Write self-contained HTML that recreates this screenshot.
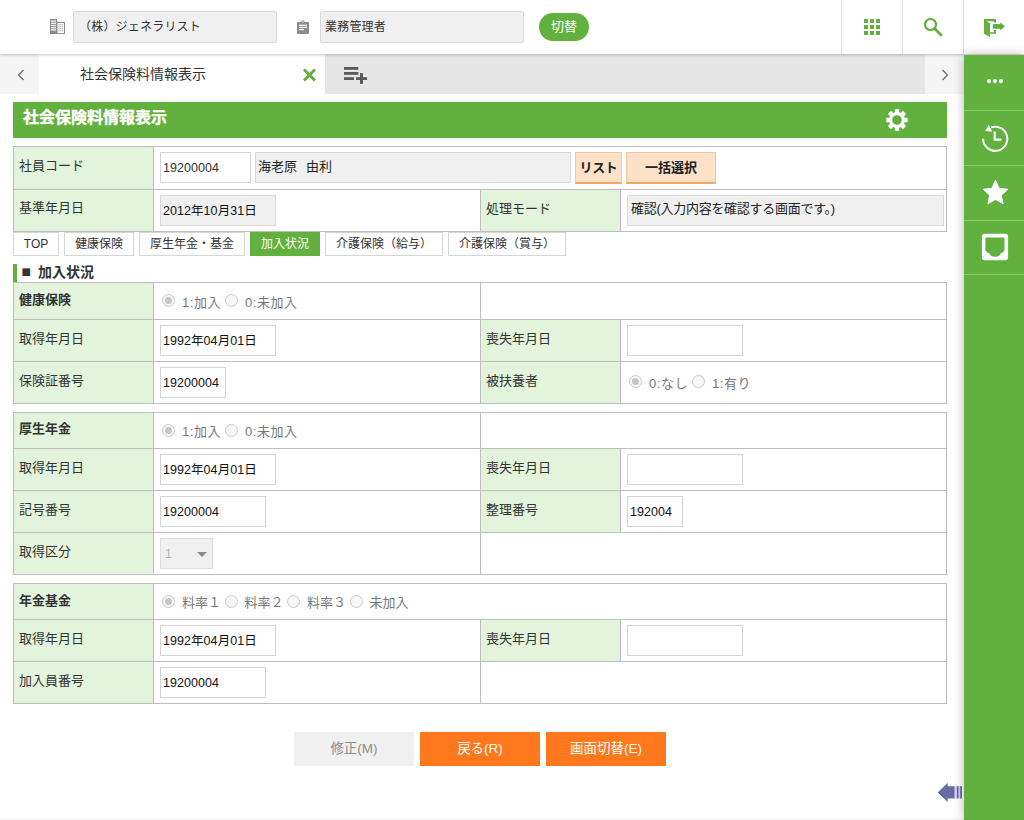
<!DOCTYPE html>
<html lang="ja">
<head>
<meta charset="utf-8">
<title>社会保険料情報表示</title>
<style>
*{box-sizing:border-box;margin:0;padding:0}
html,body{width:1024px;height:820px;overflow:hidden;background:#fff}
body{font-family:"Liberation Sans","Noto Sans CJK JP",sans-serif;font-size:13px;color:#333;position:relative}
.abs{position:absolute}
#hdr{position:absolute;left:0;top:0;width:1024px;height:54px;background:#fff;box-shadow:0 1px 3px rgba(0,0,0,.22);z-index:3}
.hbox{position:absolute;top:11px;height:32px;background:#f0f0f0;border:1px solid #d9d9d9;border-radius:2px;font-size:12px;line-height:30px;padding-left:7px;color:#333}
.hsep{position:absolute;top:0;width:1px;height:54px;background:#dedede}
#switch{position:absolute;left:539px;top:13px;width:50px;height:28px;border-radius:14px;background:#62b13e;color:#fff;font-size:13px;line-height:27px;text-align:center}
#side{position:absolute;left:964px;top:55px;width:60px;height:765px;background:#62b13e;box-shadow:0 0 10px rgba(0,0,0,.28);z-index:4}
#side .sep{position:absolute;left:0;width:60px;height:1px;background:#86c968}
#tabbar{position:absolute;left:0;top:54px;width:964px;height:40px;background:#e6e6e6}
#tabbar .arrow{position:absolute;top:0;width:39px;height:40px;background:#f5f5f5}
#tabbar .tab{position:absolute;left:39px;top:0;width:286px;height:40px;background:#fff;font-size:14px;line-height:41px;color:#333;padding-left:41px}
#title{position:absolute;left:13px;top:102px;width:934px;height:36px;background:#62b13e;color:#fff;font-weight:bold;font-size:16px;line-height:32px;padding-left:10px;-webkit-text-stroke:.35px #fff}
table.g{position:absolute;left:13px;width:933px;border-collapse:collapse;table-layout:fixed}
table.g td{border:1px solid #bdbdbd;vertical-align:top;padding:0;font-size:13px;color:#333;position:relative}
table.g td.l{background:#e2f4dc;padding:9px 0 0 5px;line-height:20px}
table.g td.l b{font-weight:bold}
.inp{position:absolute;left:6px;top:5px;height:31px;border:1px solid #d4d4d4;background:#fff;font-size:12.5px;line-height:31px;padding-left:2px;color:#111;white-space:nowrap;letter-spacing:.06px}
.inp.ro{background:#f0f0f0;border-color:#d9d9d9}
.rad{position:absolute;left:8px;top:10px;font-size:13px;line-height:20px;color:#777;white-space:nowrap;letter-spacing:.55px}
.rb{display:inline-block;width:13px;height:13px;border:1px solid #c9c9c9;border-radius:50%;background:#f7f7f7;vertical-align:0;margin-right:7px;position:relative}
.rb.on:after{content:"";position:absolute;left:2px;top:2px;width:7px;height:7px;border-radius:50%;background:#c6c6c6}
.rad .gap{display:inline-block;width:4px}
.rad.r4{letter-spacing:0}.rad.r4 .gap{width:3.5px}.rad i{font-style:normal;position:relative;top:-1px}
.tabs{position:absolute;top:232px;height:24px;border:1px solid #d6d6d6;background:#fff;font-size:12px;line-height:22px;text-align:center;color:#333;white-space:nowrap}
.tabs.on{background:#62b13e;border-color:#62b13e;color:#fff}
.btn{position:absolute;top:732px;width:120px;height:34px;font-size:13.5px;line-height:33px;text-align:center;color:#fff;background:#ff781d}
.btn.dis{background:#f0f0f0;color:#8c8c8c}
.obtn{position:absolute;top:5px;height:32px;background:#fde1c8;border:1px solid #f6c69a;border-bottom:2px solid #f2a964;font-weight:bold;font-size:13px;line-height:29px;text-align:center;color:#222;box-shadow:0 0 0 0 transparent}
</style>
</head>
<body>

<!-- header -->
<div id="hdr">
  <svg class="abs" style="left:50px;top:19px" width="16" height="16" viewBox="0 0 16 16"><rect x="0" y="0" width="7" height="15" fill="#8c8c8c"/><g fill="#fff"><rect x="1" y="1.500" width="5" height="1.200"/><rect x="1" y="3.700" width="5" height="1.200"/><rect x="1" y="5.900" width="5" height="1.200"/><rect x="1" y="8.100" width="5" height="1.200"/><rect x="1" y="10.300" width="5" height="1.200"/></g><rect x="7" y="3.500" width="7.500" height="11" fill="#fff" stroke="#8c8c8c"/><g fill="#8c8c8c"><rect x="8.500" y="5.300" width="1" height="1"/><rect x="10.300" y="5.300" width="1" height="1"/><rect x="12.100" y="5.300" width="1" height="1"/><rect x="8.500" y="7.300" width="1" height="1"/><rect x="10.300" y="7.300" width="1" height="1"/><rect x="12.100" y="7.300" width="1" height="1"/><rect x="8.500" y="9.300" width="1" height="1"/><rect x="10.300" y="9.300" width="1" height="1"/><rect x="12.100" y="9.300" width="1" height="1"/><rect x="8.500" y="11.300" width="1" height="1"/><rect x="10.300" y="11.300" width="1" height="1"/><rect x="12.100" y="11.300" width="1" height="1"/></g></svg>
  <div class="hbox" style="left:73px;width:204px;padding-left:5px;letter-spacing:.2px">（株）ジェネラリスト</div>
  <svg class="abs" style="left:297px;top:20px" width="12" height="14" viewBox="0 0 12 14"><path d="M1 2h3.200a1.800 1.800 0 0 1 3.600 0H11a1 1 0 0 1 1 1v10a1 1 0 0 1-1 1H1a1 1 0 0 1-1-1V3a1 1 0 0 1 1-1z" fill="#8c8c8c"/><circle cx="6" cy="2" r="0.700" fill="#fff"/><rect x="2" y="4.700" width="8" height="1.200" fill="#fff"/><rect x="2" y="6.800" width="8" height="1.200" fill="#fff"/><rect x="2" y="8.900" width="5" height="1.200" fill="#fff"/></svg>
  <div class="hbox" style="left:320px;width:204px;padding-left:4px;letter-spacing:.2px">業務管理者</div>
  <div id="switch">切替</div>
  <div class="hsep" style="left:841px"></div>
  <div class="hsep" style="left:902px"></div>
  <div class="hsep" style="left:963px"></div>
  <svg class="abs" style="left:864px;top:19px" width="16" height="16" viewBox="0 0 16 16" fill="#62b13e"><rect x="0" y="0" width="4" height="4"/><rect x="6" y="0" width="4" height="4"/><rect x="12" y="0" width="4" height="4"/><rect x="0" y="6" width="4" height="4"/><rect x="6" y="6" width="4" height="4"/><rect x="12" y="6" width="4" height="4"/><rect x="0" y="12" width="4" height="4"/><rect x="6" y="12" width="4" height="4"/><rect x="12" y="12" width="4" height="4"/></svg>
  <svg class="abs" style="left:923px;top:17px" width="20" height="20" viewBox="0 0 20 20"><circle cx="7.5" cy="7.5" r="5.5" fill="none" stroke="#62b13e" stroke-width="2.2"/><path d="M11.5 11.5L18 18" stroke="#62b13e" stroke-width="2.8" stroke-linecap="round"/></svg>
  <svg class="abs" style="left:980px;top:16px" width="28" height="24" viewBox="0 0 28 24" fill="#62b13e"><path d="M4 3H16V6.600H13.800V5.300H6.500L10 7.200V20.900L4 17.700z"/><path d="M10 16.200H13.800V14H16V17.700H10z"/><path d="M13 8.100H20.200V6.200L25 10.400L20.200 14.600V12.800H13z"/></svg>
</div>

<!-- right side bar -->
<div id="side">
  <div class="sep" style="top:55px"></div>
  <div class="sep" style="top:110px"></div>
  <div class="sep" style="top:165px"></div>
  <div class="sep" style="top:219px"></div>
  <svg class="abs" style="left:21px;top:22px" width="20" height="8" viewBox="0 0 20 8" fill="#fff"><circle cx="4" cy="4.100" r="2.100"/><circle cx="10" cy="4.100" r="2.100"/><circle cx="16" cy="4.100" r="2.100"/></svg>
  <svg class="abs" style="left:16px;top:68px" width="30" height="30" viewBox="0 0 30 30"><path d="M11.100 4.400A12.100 12.100 0 1 1 3.100 15.750" fill="none" stroke="#fff" stroke-width="2"/><path d="M5.300 8L8.800 1.900L12.400 8.800z" fill="#fff"/><path d="M14.700 8.400v8.200h6.800" fill="none" stroke="#fff" stroke-width="2.100"/></svg>
  <svg class="abs" style="left:17px;top:123px" width="30" height="30" viewBox="0 0 30 30"><path d="M14.50 2.30 L18.09 10.36 L26.86 11.28 L20.30 17.19 L22.14 25.82 L14.50 21.40 L6.86 25.82 L8.70 17.19 L2.14 11.28 L10.91 10.36z" fill="#fff" stroke="#fff" stroke-width="1" stroke-linejoin="round"/></svg>
  <svg class="abs" style="left:17px;top:178px" width="28" height="28" viewBox="0 0 28 28"><path d="M3.900 .800h20.200a3 3 0 0 1 3 3v20.500a3 3 0 0 1-3 3H3.900a3 3 0 0 1-3-3V3.800a3 3 0 0 1 3-3zM5.400 4.500a1 1 0 0 0-1 1V17.500l2.500 2.500H8.400a5.700 3.800 0 0 0 11.400 0H21l2.500-2.500V5.500a1 1 0 0 0-1-1z" fill="#fff" fill-rule="evenodd"/></svg>
</div>

<!-- tab bar -->
<div id="tabbar">
  <div class="arrow" style="left:0"><svg class="abs" style="left:17px;top:15px" width="8" height="12" viewBox="0 0 8 12"><path d="M6.500 1L1.500 6l5 5" fill="none" stroke="#666" stroke-width="1.200"/></svg></div>
  <div class="tab">社会保険料情報表示</div>
  <svg class="abs" style="left:302px;top:14px;z-index:2" width="15" height="14" viewBox="0 0 15 14"><path d="M2 1.500l11 11M13 1.500L2 12.500" stroke="#62b13e" stroke-width="3"/></svg>
  <svg class="abs" style="left:344px;top:13px" width="24" height="18" viewBox="0 0 24 18" fill="#5a5a5a"><rect x="0" y="0" width="14.300" height="2.800"/><rect x="0" y="5" width="14.300" height="2.800"/><rect x="0" y="10.200" width="10" height="2.800"/><rect x="16" y="6.100" width="3" height="10.800"/><rect x="12" y="10.200" width="11" height="2.800"/></svg>
  <div class="arrow" style="left:925px"><svg class="abs" style="left:16px;top:15px" width="8" height="12" viewBox="0 0 8 12"><path d="M1.500 1l5 5-5 5" fill="none" stroke="#666" stroke-width="1.200"/></svg></div>
</div>

<!-- title -->
<div id="title">社会保険料情報表示
  <svg class="abs" style="left:873px;top:7px" width="22" height="22" viewBox="0 0 22 22"><g fill="#fff"><circle cx="11" cy="11" r="8"/><g id="teeth"><rect x="8.800" y="0.300" width="4.400" height="21.400" rx="0.300"/><rect x="8.800" y="0.300" width="4.400" height="21.400" rx="0.300" transform="rotate(45 11 11)"/><rect x="8.800" y="0.300" width="4.400" height="21.400" rx="0.300" transform="rotate(90 11 11)"/><rect x="8.800" y="0.300" width="4.400" height="21.400" rx="0.300" transform="rotate(135 11 11)"/></g></g><circle cx="11" cy="11" r="4.800" fill="#62b13e"/></svg>
</div>

<!-- table 1 -->
<table class="g" style="top:146px">
<colgroup><col style="width:140px"><col style="width:327px"><col style="width:140px"><col style="width:326px"></colgroup>
<tr style="height:43px"><td class="l">社員コード</td><td colspan="3">
  <div class="inp" style="width:91px;color:#333">19200004</div>
  <div class="inp ro" style="left:101px;width:316px;font-size:13px;color:#222;letter-spacing:0;padding-left:2px;line-height:27px">海老原<span style="display:inline-block;width:9px"></span>由利</div>
  <div class="obtn" style="left:421px;width:47px;font-size:13px;letter-spacing:-.3px">リスト</div>
  <div class="obtn" style="left:472px;width:90px">一括選択</div>
</td></tr>
<tr style="height:42px"><td class="l" style="padding-top:8px">基準年月日</td><td><div class="inp ro" style="width:116px">2012年10月31日</div></td><td class="l">処理モード</td><td><div class="inp ro" style="width:317px;font-size:13px;color:#222;letter-spacing:-.28px;padding-left:3px;line-height:25px">確認(入力内容を確認する画面です。)</div></td></tr>
</table>

<!-- sub tabs -->
<div class="tabs" style="left:13px;width:46px">TOP</div>
<div class="tabs" style="left:64px;width:70px">健康保険</div>
<div class="tabs" style="left:139px;width:106px">厚生年金・基金</div>
<div class="tabs on" style="left:250px;width:70px">加入状況</div>
<div class="tabs" style="left:325px;width:118px">介護保険（給与）</div>
<div class="tabs" style="left:448px;width:118px">介護保険（賞与）</div>

<!-- section header -->
<div class="abs" style="left:13px;top:264px;width:4px;height:18px;background:#62b13e"></div>
<div class="abs" style="left:38px;top:263px;font-size:14px;font-weight:bold;line-height:19px;color:#333"><span style="position:absolute;left:-16.600px;top:0;font-size:10px;font-weight:normal;line-height:18px;font-family:'DejaVu Sans',sans-serif">■</span>加入状況</div>

<!-- table 2 -->
<table class="g" style="top:282px">
<colgroup><col style="width:140px"><col style="width:327px"><col style="width:140px"><col style="width:326px"></colgroup>
<tr style="height:37px"><td class="l" style="padding-top:7px"><b>健康保険</b></td><td><div class="rad"><span class="rb on"></span>1:加入<span class="gap"></span><span class="rb"></span>0:未加入</div></td><td colspan="2"></td></tr>
<tr style="height:42px"><td class="l">取得年月日</td><td><div class="inp" style="width:116px">1992年04月01日</div></td><td class="l">喪失年月日</td><td><div class="inp" style="width:116px"></div></td></tr>
<tr style="height:42px"><td class="l">保険証番号</td><td><div class="inp" style="width:66px">19200004</div></td><td class="l">被扶養者</td><td><div class="rad" style="top:12px"><span class="rb on"></span>0:なし<span class="gap"></span><span class="rb"></span>1:有り</div></td></tr>
</table>

<!-- table 3 -->
<table class="g" style="top:412px">
<colgroup><col style="width:140px"><col style="width:327px"><col style="width:140px"><col style="width:326px"></colgroup>
<tr style="height:36px"><td class="l" style="padding-top:6px"><b>厚生年金</b></td><td><div class="rad up"><span class="rb on"></span><i>1:加入</i><span class="gap"></span><span class="rb"></span><i>0:未加入</i></div></td><td colspan="2"></td></tr>
<tr style="height:42px"><td class="l">取得年月日</td><td><div class="inp" style="width:116px">1992年04月01日</div></td><td class="l">喪失年月日</td><td><div class="inp" style="width:116px"></div></td></tr>
<tr style="height:42px"><td class="l">記号番号</td><td><div class="inp" style="width:106px">19200004</div></td><td class="l">整理番号</td><td><div class="inp" style="width:56px">192004</div></td></tr>
<tr style="height:42px"><td class="l">取得区分</td><td><div class="inp ro" style="width:53px;color:#b5b5b5;padding-left:4px;border-color:#dedede">1<svg class="abs" style="left:36px;top:13px" width="10" height="5" viewBox="0 0 10 5"><path d="M0 0h10L5 5z" fill="#8a8a8a"/></svg></div></td><td colspan="2"></td></tr>
</table>

<!-- table 4 -->
<table class="g" style="top:583px">
<colgroup><col style="width:140px"><col style="width:327px"><col style="width:140px"><col style="width:326px"></colgroup>
<tr style="height:36px"><td class="l" style="padding-top:7px"><b>年金基金</b></td><td colspan="3"><div class="rad r4"><span class="rb on"></span><i>料率１</i><span class="gap"></span><span class="rb"></span><i>料率２</i><span class="gap"></span><span class="rb"></span><i>料率３</i><span class="gap"></span><span class="rb"></span><i>未加入</i></div></td></tr>
<tr style="height:42px"><td class="l">取得年月日</td><td><div class="inp" style="width:116px">1992年04月01日</div></td><td class="l">喪失年月日</td><td><div class="inp" style="width:116px"></div></td></tr>
<tr style="height:42px"><td class="l">加入員番号</td><td><div class="inp" style="width:106px">19200004</div></td><td colspan="2"></td></tr>
</table>

<!-- buttons -->
<div class="btn dis" style="left:294px">修正(M)</div>
<div class="btn" style="left:420px">戻る(R)</div>
<div class="btn" style="left:546px">画面切替(E)</div>

<!-- bottom arrow -->
<svg class="abs" style="left:937px;top:782px;z-index:3" width="26" height="22" viewBox="0 0 26 22"><rect x="17" y="4.200" width="8" height="12.300" fill="#d2d2f2"/><path d="M0.700 10.400L10.700 0.800V4.200H17.500V16.500H10.700V20z" fill="#6a6aa4"/><rect x="19.900" y="4.200" width="1.600" height="12.300" fill="#6a6aa4"/><rect x="23.200" y="4.200" width="1.800" height="12.300" fill="#6a6aa4"/></svg>
<div class="abs" style="left:0;top:818px;width:964px;height:2px;background:#f4f4f4"></div>

</body>
</html>
